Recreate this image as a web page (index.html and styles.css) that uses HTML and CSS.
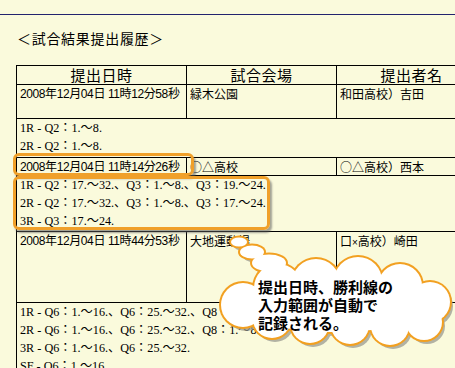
FILE: index.html
```html
<!DOCTYPE html>
<html lang="ja">
<head>
<meta charset="utf-8">
<title>試合結果提出履歴</title>
<link rel="stylesheet" href="styles.css">
</head>
<body>
<div class="rule"></div>
<h1 class="title">＜試合結果提出履歴＞</h1>
<div class="wrap">
  <table class="history">
    <colgroup><col class="c1"><col class="c2"><col class="c3"></colgroup>
    <tr class="head"><th>提出日時</th><th>試合会場</th><th>提出者名</th></tr>
    <tr class="entry r1"><td class="when">2008年12月04日 11時12分58秒</td><td>緑木公園</td><td>和田高校）吉田</td></tr>
    <tr class="detail d1"><td colspan="3">1R - Q2：1.～8.<br>2R - Q2：1.～8.</td></tr>
    <tr class="entry r2"><td class="when">2008年12月04日 11時14分26秒</td><td>○△高校</td><td>○△高校）西本</td></tr>
    <tr class="detail d2"><td colspan="3">1R - Q2：17.～32.、Q3：1.～8.、Q3：19.～24.<br>2R - Q2：17.～32.、Q3：1.～8.、Q3：17.～24.<br>3R - Q3：17.～24.</td></tr>
    <tr class="entry r3"><td class="when">2008年12月04日 11時44分53秒</td><td>大地運動場</td><td>口<span class="times">×</span>高校）崎田</td></tr>
    <tr class="detail d3"><td colspan="3">1R - Q6：1.～16.、Q6：25.～32.、Q8：1.～8.<br>2R - Q6：1.～16.、Q6：25.～32.、Q8：1.～8.<br>3R - Q6：1.～16.、Q6：25.～32.<br>SF - Q6：1.～16.</td></tr>
  </table>
</div>
<div class="mark mark-date"></div>
<div class="mark mark-range"></div>
<svg class="cloud" width="455" height="368" viewBox="0 0 455 368" aria-hidden="true">
  <g fill="#9a9a90" opacity="0.75" transform="translate(3 4)">
    <ellipse cx="239" cy="242" rx="8" ry="4.5"/>
    <ellipse cx="252" cy="252" rx="12" ry="6.5"/>
    <ellipse cx="269" cy="263" rx="17" ry="8.5"/>
    <circle cx="278" cy="288" r="24"/>
    <circle cx="316" cy="283" r="24"/>
    <circle cx="358" cy="281" r="24"/>
    <circle cx="400" cy="286" r="22"/>
    <circle cx="430" cy="302" r="20"/>
    <circle cx="424" cy="322" r="18"/>
    <circle cx="390" cy="326" r="19"/>
    <circle cx="350" cy="325" r="19"/>
    <circle cx="310" cy="324" r="19"/>
    <circle cx="272" cy="319" r="19"/>
    <circle cx="243" cy="305" r="22"/>
    <ellipse cx="335" cy="306" rx="95" ry="26"/>
  </g>
  <g fill="#f2a021">
    <ellipse cx="239" cy="242" rx="10" ry="6.5"/>
    <ellipse cx="252" cy="252" rx="14" ry="8.5"/>
    <ellipse cx="269" cy="263" rx="19" ry="10.5"/>
    <circle cx="278" cy="288" r="26"/>
    <circle cx="316" cy="283" r="26"/>
    <circle cx="358" cy="281" r="26"/>
    <circle cx="400" cy="286" r="24"/>
    <circle cx="430" cy="302" r="22"/>
    <circle cx="424" cy="322" r="20"/>
    <circle cx="390" cy="326" r="21"/>
    <circle cx="350" cy="325" r="21"/>
    <circle cx="310" cy="324" r="21"/>
    <circle cx="272" cy="319" r="21"/>
    <circle cx="243" cy="305" r="24"/>
    <ellipse cx="335" cy="306" rx="97" ry="28"/>
  </g>
  <g fill="#ffffff">
    <ellipse cx="239" cy="242" rx="8" ry="4.5"/>
    <ellipse cx="252" cy="252" rx="12" ry="6.5"/>
    <ellipse cx="269" cy="263" rx="17" ry="8.5"/>
    <circle cx="278" cy="288" r="24"/>
    <circle cx="316" cy="283" r="24"/>
    <circle cx="358" cy="281" r="24"/>
    <circle cx="400" cy="286" r="22"/>
    <circle cx="430" cy="302" r="20"/>
    <circle cx="424" cy="322" r="18"/>
    <circle cx="390" cy="326" r="19"/>
    <circle cx="350" cy="325" r="19"/>
    <circle cx="310" cy="324" r="19"/>
    <circle cx="272" cy="319" r="19"/>
    <circle cx="243" cy="305" r="22"/>
    <ellipse cx="335" cy="306" rx="95" ry="26"/>
  </g>
</svg>
<p class="cloud-text">提出日時、勝利線の<br>入力範囲が自動で<br>記録される。</p>
</body>
</html>
```
FILE: styles.css
```css
html, body {
  margin: 0;
  padding: 0;
  overflow: hidden;
}
body {
  width: 455px;
  height: 368px;
  position: relative;
  background: #fafadc;
  font-family: "Noto Sans CJK JP", "DejaVu Sans", sans-serif;
  color: #000;
}
.rule {
  margin-top: 14px;
  height: 1px;
  background: #22226e;
}
.title {
  margin: 14px 0 0 17px;
  font-size: 14px;
  font-weight: normal;
  line-height: 18px;
  height: 18px;
  letter-spacing: 0.7px;
}
.wrap {
  margin: 18px 0 0 16px;
}
.history {
  border-collapse: collapse;
  table-layout: fixed;
  width: 470px;
}
.c1 { width: 170px; }
.c2 { width: 150px; }
.c3 { width: 150px; }
.history th,
.history td {
  border: 1px solid #000;
  padding: 0 3px;
  vertical-align: top;
  text-align: left;
  font-weight: normal;
}
.head th {
  height: 18px;
  font-size: 15px;
  line-height: 18px;
  text-align: center;
  letter-spacing: 0.5px;
}
.entry td {
  font-family: "Noto Sans CJK JP", sans-serif;
  font-size: 12px;
  line-height: 16px;
  padding-top: 1px;
  white-space: nowrap;
}
.entry .when {
  font-family: "Liberation Sans", "Noto Sans CJK JP", sans-serif;
  letter-spacing: -0.4px;
}
.times {
  font-family: "Liberation Sans", sans-serif;
  font-size: 10px;
}
.r1 td { height: 32px; }
.r2 td { height: 15px; }
.r3 td { height: 69px; }
.detail td {
  font-family: "Liberation Serif", "Noto Sans CJK JP", serif;
  font-size: 12.2px;
  line-height: 18px;
  white-space: nowrap;
  padding-top: 0;
  padding-bottom: 1px;
}
.d1 td { height: 37px; }
.d2 td { height: 53px; }
.mark {
  position: absolute;
  border: 3px solid #f0a02a;
  border-radius: 6px;
  box-shadow: 2px 3px 2px rgba(90, 90, 90, 0.55);
}
.mark-date {
  left: 13px;
  top: 153px;
  width: 175px;
  height: 17px;
}
.mark-range {
  left: 13px;
  top: 176px;
  width: 251px;
  height: 48px;
}
.cloud {
  position: absolute;
  left: 0;
  top: 0;
}
.cloud-text {
  position: absolute;
  left: 258px;
  top: 278px;
  margin: 0;
  font-size: 15px;
  line-height: 18px;
  font-weight: bold;
  letter-spacing: 0;
}
```
